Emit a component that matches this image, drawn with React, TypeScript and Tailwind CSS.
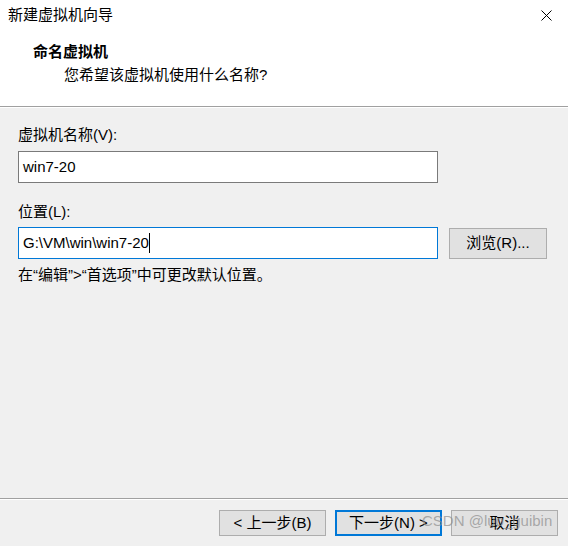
import React from 'react';

const font = "font-['Liberation_Sans','Noto_Sans_CJK_SC',sans-serif]";

function DlgButton({ label, primary }: { label: string; primary?: boolean }) {
  return (
    <button
      className={`w-[107px] h-[26px] flex items-center justify-center bg-[#e1e1e1] text-[15px] leading-[20px] text-black ${primary
          ? 'border-2 border-[#0078d7]'
          : 'border border-[#adadad]'
        }`}
    >
      {label}
    </button>
  );
}

export default function App() {
  return (
    <div className={`relative w-[568px] h-[546px] bg-[#f0f0f0] flex flex-col text-black ${font}`}>
      {/* Header */}
      <div className="h-[106px] bg-white flex flex-col">
        <div className="pt-[4px] pl-[8px] pr-[16px] flex items-start justify-between">
          <span className="text-[15px] leading-[22px]">新建虚拟机向导</span>
          <svg width="11" height="11" viewBox="0 0 11 11" className="mt-[6px]">
            <path d="M0.5 0.5 L10.5 10.5 M10.5 0.5 L0.5 10.5" stroke="#000" strokeWidth="1" />
          </svg>
        </div>
        <div className="mt-[15px] pl-[33px] text-[15px] leading-[22px] font-bold">命名虚拟机</div>
        <div className="mt-[1px] pl-[64px] text-[15px] leading-[22px]">您希望该虚拟机使用什么名称?</div>
      </div>
      <div className="h-px bg-[#a0a0a0]" />
      <div className="h-px bg-white" />

      {/* Body */}
      <div className="flex-1 flex flex-col pl-[18px]">
        <div className="mt-[16px] text-[15px] leading-[22px]">虚拟机名称(V):</div>
        <div className="mt-[5px] w-[420px] h-[32px] bg-white border border-[#7a7a7a] flex items-center pl-[4px] text-[15px]">
          win7-20
        </div>
        <div className="mt-[18px] text-[15px] leading-[22px]">位置(L):</div>
        <div className="mt-[4px] flex items-start gap-[11px]">
          <div className="w-[420px] h-[32px] bg-white border border-[#0078d7] flex items-center pl-[4px] text-[15px]">
            <span>G:\VM\win\win7-20</span>
            <span className="w-px h-[20px] bg-black" />
          </div>
          <button className="mt-[1px] w-[98px] h-[31px] bg-[#e1e1e1] border border-[#adadad] text-[15px] flex items-center justify-center">
            浏览(R)...
          </button>
        </div>
        <div className="mt-[5px] text-[15px] leading-[22px]">在“编辑”&gt;“首选项”中可更改默认位置。</div>
      </div>

      {/* Footer */}
      <div className="h-px bg-[#a0a0a0]" />
      <div className="h-px bg-white" />
      <div className="h-[46px] pt-[10px] pr-[10px] flex justify-end gap-[9px]">
        <DlgButton label="< 上一步(B)" />
        <DlgButton label="下一步(N) >" primary />
        <DlgButton label="取消" />
      </div>

      {/* Watermark */}
      <div className="absolute left-[422px] top-[511px] text-[15px] leading-[20px] text-[rgba(140,140,140,0.7)] whitespace-nowrap">
        CSDN @luo_guibin
      </div>
    </div>
  );
}
